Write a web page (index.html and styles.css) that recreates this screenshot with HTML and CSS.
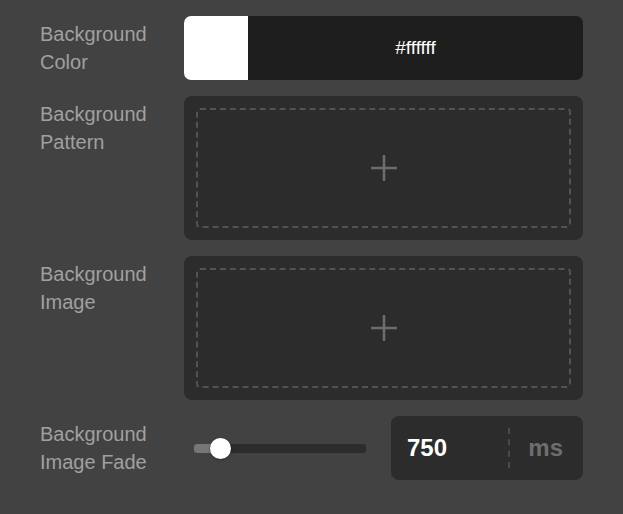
FILE: index.html
```html
<!DOCTYPE html>
<html lang="en">
<head>
    <meta charset="UTF-8">
    <meta name="viewport" content="width=device-width, initial-scale=1.0">
    <title>Background Settings</title>
    <link rel="stylesheet" href="styles.css">
</head>
<body>
    <div class="settings">
        <div class="row">
            <div class="label">Background<br>Color</div>
            <div class="control color-box">
                <div class="swatch"></div>
                <div class="hex">#ffffff</div>
            </div>
        </div>

        <div class="row">
            <div class="label">Background<br>Pattern</div>
            <div class="control drop-box">
                <div class="drop-inner">
                    <svg width="26" height="26" viewBox="0 0 26 26">
                        <path d="M13 1v24M1 13h24" stroke="#6c6c6c" stroke-width="2.6" stroke-linecap="round" fill="none"/>
                    </svg>
                </div>
            </div>
        </div>

        <div class="row">
            <div class="label">Background<br>Image</div>
            <div class="control drop-box">
                <div class="drop-inner">
                    <svg width="26" height="26" viewBox="0 0 26 26">
                        <path d="M13 1v24M1 13h24" stroke="#6c6c6c" stroke-width="2.6" stroke-linecap="round" fill="none"/>
                    </svg>
                </div>
            </div>
        </div>

        <div class="row">
            <div class="label">Background<br>Image Fade</div>
            <div class="control fade">
                <div class="slider">
                    <div class="track">
                        <div class="fill" style="width: 26px"></div>
                        <div class="thumb" style="left: 26px"></div>
                    </div>
                </div>
                <div class="num-box">
                    <span class="num">750</span>
                    <span class="divider"></span>
                    <span class="unit">ms</span>
                </div>
            </div>
        </div>
    </div>
</body>
</html>
```

FILE: styles.css
```css
html, body {
    margin: 0;
    background: #424242;
}
body {
    font-family: "Liberation Sans", Arial, sans-serif;
}
.settings {
    display: flex;
    flex-direction: column;
    gap: 16px;
    padding: 16px 40px 0;
}
.row {
    display: flex;
}
.label {
    width: 144px;
    padding-top: 4px;
    font-size: 20px;
    line-height: 28px;
    color: #a0a0a0;
}
.control {
    width: 399px;
}
.color-box {
    display: flex;
    height: 64px;
    background: #1e1e1e;
    border-radius: 7px;
    overflow: hidden;
}
.swatch {
    width: 64px;
    background: #ffffff;
}
.hex {
    flex: 1;
    display: flex;
    align-items: center;
    justify-content: center;
    color: #ffffff;
    font-size: 19px;
}
.drop-box {
    height: 144px;
    box-sizing: border-box;
    padding: 12px;
    background: #2c2c2c;
    border-radius: 8px;
}
.drop-inner {
    height: 100%;
    box-sizing: border-box;
    border: 2px dashed #525252;
    border-radius: 4px;
    display: flex;
    align-items: center;
    justify-content: center;
}
.fade {
    display: flex;
    align-items: center;
    height: 64px;
}
.slider {
    width: 207px;
    padding-left: 10px;
    box-sizing: border-box;
}
.track {
    position: relative;
    width: 172px;
    height: 9px;
    background: #2c2c2c;
    border-radius: 3px;
}
.fill {
    height: 100%;
    background: #777777;
    border-radius: 3px 0 0 3px;
}
.thumb {
    position: absolute;
    top: 50%;
    width: 21px;
    height: 21px;
    margin: -10.5px 0 0 -10.5px;
    background: #ffffff;
    border-radius: 50%;
    box-shadow: 0 1px 3px rgba(0, 0, 0, 0.35);
}
.num-box {
    flex: 1;
    height: 64px;
    display: flex;
    align-items: center;
    background: #2c2c2c;
    border-radius: 8px;
    font-size: 24px;
    font-weight: bold;
}
.num {
    flex: 1;
    padding-left: 16px;
    color: #ffffff;
}
.divider {
    height: 40px;
    border-left: 2px dashed #4a4a4a;
}
.unit {
    padding: 0 20px 0 18px;
    color: #6e6e6e;
}
```
